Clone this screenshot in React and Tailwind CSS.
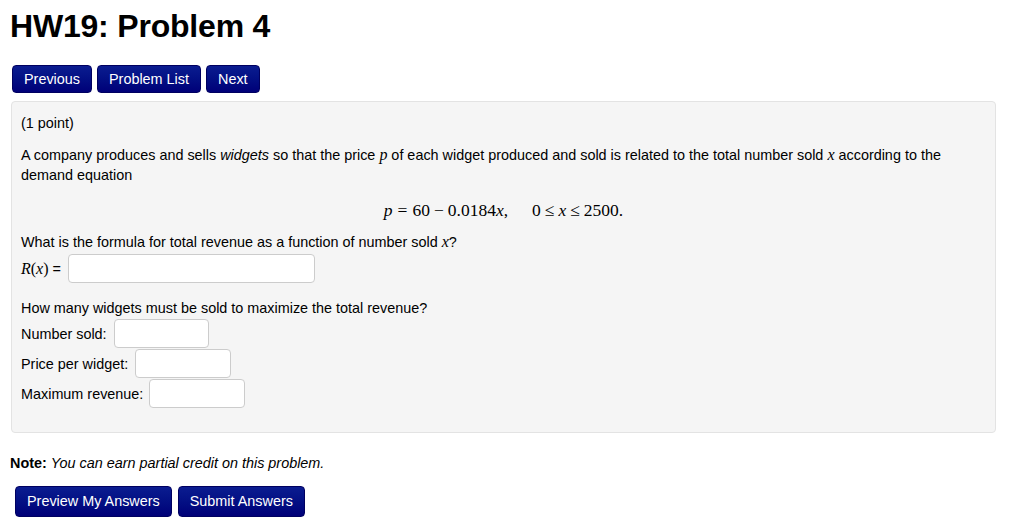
import React from 'react';

const btn =
  'h-[28px] px-[11px] rounded-[4px] border border-[#000060] bg-gradient-to-b from-[#0b1c90] to-[#000078] text-white text-[14.4px] leading-none';

const field =
  'h-[29px] rounded-[4px] border border-[#cccccc] bg-white';

const serif = { fontFamily: '"Liberation Serif", "DejaVu Serif", serif' };

const M = ({ children }) => (
  <span className="italic text-[16px] leading-[16px]" style={serif}>
    {children}
  </span>
);

export default function App() {
  return (
    <div
      className="min-h-[522px] bg-white text-[#000] px-[10px] pt-[8px]"
      style={{ fontFamily: '"Liberation Sans", Arial, sans-serif' }}
    >
      <h1 className="text-[32px] font-bold leading-[36px] tracking-[-0.2px]">HW19: Problem 4</h1>

      <div className="flex gap-[5px] mt-[21px] ml-[2px]">
        <button className={btn + ' px-[10.5px]'}>Previous</button>
        <button className={btn + ' px-[10.5px]'}>Problem List</button>
        <button className={btn + ' px-[10.5px]'}>Next</button>
      </div>

      <div className="mt-[8px] ml-[1px] w-[985px] h-[332px] bg-[#f5f5f5] border border-[#e3e3e3] rounded-[4px] px-[9px] pt-[11px] text-[14.4px] leading-[20px]">
        <p>(1 point)</p>
        <p className="mt-[12px]">
          A company produces and sells <i>widgets</i> so that the price <M>p</M> of each widget produced and sold is
          related to the total number sold <M>x</M> according to the demand equation
        </p>
        <div className="mt-[14px] text-center text-[17.5px] leading-[22px]" style={serif}>
          <i>p</i>
          <span className="mx-[5px]">=</span>60<span className="mx-[4px]">−</span>0.0184<i>x</i>,
          <span className="inline-block w-[24px]"></span>0<span className="mx-[4px]">≤</span>
          <i>x</i>
          <span className="mx-[4px]">≤</span>2500.
        </div>
        <p className="mt-[11px]">
          What is the formula for total revenue as a function of number sold <M>x</M>?
        </p>
        <div className="flex items-center mt-[2px]">
          <span style={serif} className="text-[16px]">
            <i>R</i>(<i>x</i>)
          </span>
          <span className="ml-[4px]">=</span>
          <div className={field + ' w-[247px] ml-[7px]'}></div>
        </div>

        <p className="mt-[15px]">How many widgets must be sold to maximize the total revenue?</p>
        <div className="flex items-center mt-[1px]">
          <span>Number sold:</span>
          <div className={field + ' w-[95px] ml-[7px]'}></div>
        </div>
        <div className="flex items-center mt-[1px]">
          <span>Price per widget:</span>
          <div className={field + ' w-[96px] ml-[7px]'}></div>
        </div>
        <div className="flex items-center mt-[1px]">
          <span>Maximum revenue:</span>
          <div className={field + ' w-[96px] ml-[6px]'}></div>
        </div>
      </div>

      <p className="mt-[20px] text-[14.4px] leading-[20px]">
        <b>Note:</b> <i>You can earn partial credit on this problem.</i>
      </p>

      <div className="flex gap-[6px] mt-[13px] ml-[5px]">
        <button className={btn + ' h-[31px] px-[11px]'}>Preview My Answers</button>
        <button className={btn + ' h-[31px] px-[11px]'}>Submit Answers</button>
      </div>
    </div>
  );
}
